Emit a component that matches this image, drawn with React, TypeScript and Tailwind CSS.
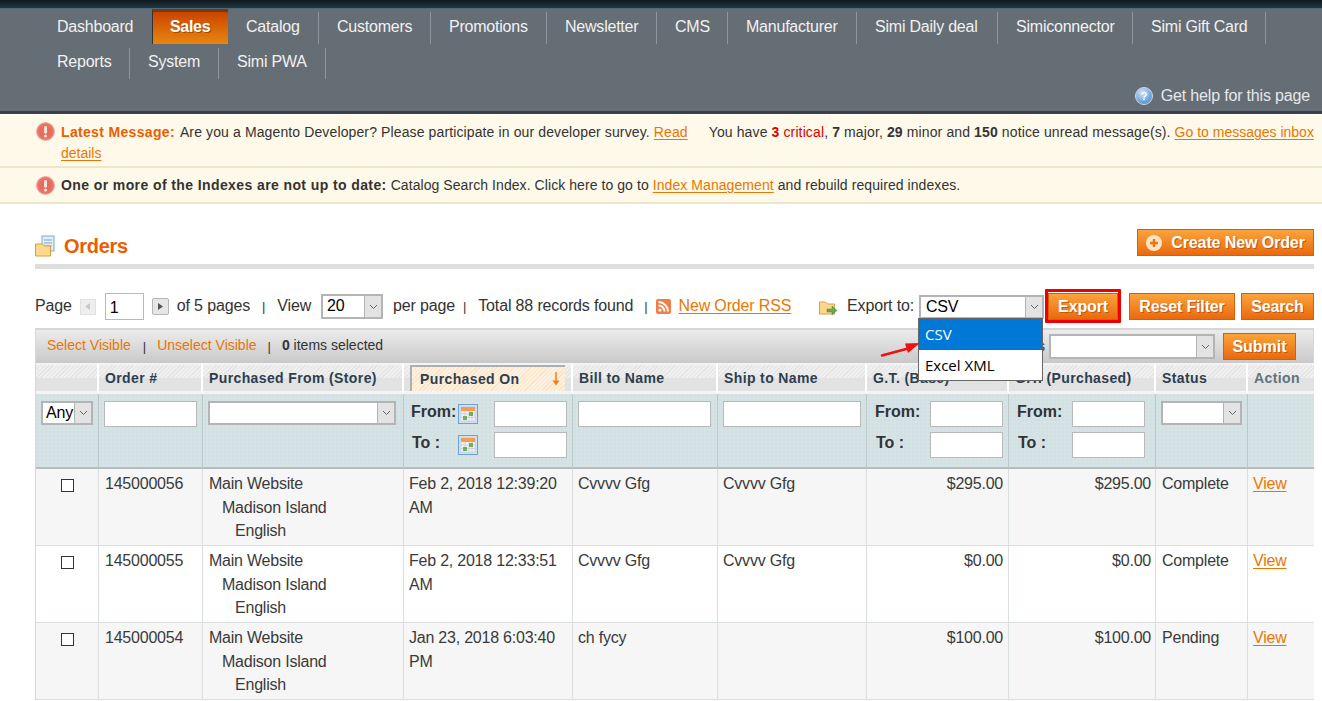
import React from "react";

const navRow1: [string, string][] = [
  ["Dashboard", "w-[114px]"], ["Catalog", "w-[91px]"], ["Customers", "w-[112px]"], ["Promotions", "w-[116px]"], ["Newsletter", "w-[110px]"],
  ["CMS", "w-[71px]"], ["Manufacturer", "w-[129px]"], ["Simi Daily deal", "w-[141px]"], ["Simiconnector", "w-[135px]"], ["Simi Gift Card", "w-[133px]"],
];
const navRow2: [string, string][] = [["Reports", "w-[91px]"], ["System", "w-[89px]"], ["Simi PWA", "w-[107px]"]];

function Alert() {
  return (
    <svg width="19" height="19" viewBox="0 0 19 19" className="shrink-0">
      <circle cx="9.5" cy="9.5" r="9" fill="#e8776a" stroke="#f2b3a8" />
      <circle cx="9.5" cy="9.5" r="6.5" fill="#ea6a5c" />
      <rect x="8" y="4" width="3" height="7.5" rx="1.2" fill="#fbe4dc" />
      <circle cx="9.5" cy="14" r="1.6" fill="#fbe4dc" />
    </svg>
  );
}

function Chevron() {
  return (
    <svg width="9" height="6" viewBox="0 0 9 6">
      <path d="M1 1l3.5 3.5L8 1" fill="none" stroke="#666" strokeWidth="1" />
    </svg>
  );
}

function Sel({ cls, text, pad = "pl-[4px]" }: { cls: string; text?: string; pad?: string }) {
  return (
    <div className={`flex border-2 border-[#b4b4b4] bg-white shrink-0 overflow-hidden ${cls}`}>
      <div className={`flex-1 ${pad} text-[16px] text-black leading-[20px] overflow-hidden whitespace-nowrap tracking-[-0.2px]`}>{text}</div>
      <div className="w-[17px] bg-[#e3e3e3] border-l border-[#b4b4b4] flex items-center justify-center shrink-0">
        <Chevron />
      </div>
    </div>
  );
}

function Btn({ children, cls }: { children: React.ReactNode; cls: string }) {
  return (
    <div className={`flex items-center justify-center border border-[#d85e0a] bg-gradient-to-b from-[#fba33a] to-[#e9690b] text-white font-bold text-[16px] [text-shadow:1px_1px_0_#c65a08] shrink-0 ${cls}`}>
      {children}
    </div>
  );
}

function Input({ cls, children }: { cls: string; children?: React.ReactNode }) {
  return <div className={`bg-white border border-[#b9b9b9] shrink-0 ${cls}`}>{children}</div>;
}

function Cal() {
  return (
    <svg width="20" height="20" viewBox="0 0 20 20" className="shrink-0">
      <rect x="0.5" y="0.5" width="19" height="19" fill="#cfe0f2" stroke="#6fa3d8" />
      <rect x="3" y="3" width="14" height="14" fill="#f3f3f3" stroke="#b9c6d2" strokeWidth="0.5" />
      <rect x="3" y="3" width="14" height="4" fill="#f59c52" />
      <path d="M3 10h14M3 13.5h14M7 7v10M11 7v10M14 7v10" stroke="#b7c2cc" strokeWidth="0.6" />
      <rect x="5" y="12" width="4" height="4" fill="#76ad5c" />
      <rect x="11" y="8" width="4" height="4" fill="#76ad5c" />
    </svg>
  );
}

function DateFilter() {
  return (
    <div className="flex flex-col gap-[5px] pt-[7px] pl-[7px] font-bold text-[16px] text-[#333]">
      <div className="flex items-center h-[26px]">
        <span className="w-[47px] -mt-[4px]">From:</span>
        <span className="w-[36px] flex"><Cal /></span>
        <Input cls="w-[73px] h-[26px]" />
      </div>
      <div className="flex items-center h-[26px]">
        <span className="w-[47px] pl-[1px] -mt-[4px]">To :</span>
        <span className="w-[36px] flex"><Cal /></span>
        <Input cls="w-[73px] h-[26px]" />
      </div>
    </div>
  );
}

function PriceFilter() {
  return (
    <div className="flex flex-col gap-[5px] pt-[7px] pl-[8px] font-bold text-[16px] text-[#333]">
      <div className="flex items-center h-[26px]">
        <span className="w-[55px] -mt-[4px]">From:</span>
        <Input cls="w-[73px] h-[26px]" />
      </div>
      <div className="flex items-center h-[26px]">
        <span className="w-[55px] pl-[1px] -mt-[4px]">To :</span>
        <Input cls="w-[73px] h-[26px]" />
      </div>
    </div>
  );
}

const hatch =
  "bg-[linear-gradient(to_bottom,transparent_0,transparent_50%,#e2e2e2_50%,#e2e2e2_100%),repeating-linear-gradient(135deg,#e4e4e4_0,#e4e4e4_1px,#efefef_1px,#efefef_3px)]";
const th = `${hatch} border-t-2 border-b-[3px] border-t-[#f4f4f4] border-b-[#f4f4f4] border-r-2 border-r-white text-left font-bold text-[14px] tracking-[0.38px] text-[#2d3e50] px-[6px] p-0 h-[31px] shadow-[0_1px_0_#9aa5aa]`;
const ftd =
  "h-[75px] align-top p-0 border-r border-[#bdc8ca] border-b-2 border-b-[#b4bcbe] bg-[#d5e3e5] bg-[radial-gradient(#cfdfe2_1px,transparent_1px)] bg-[length:4px_4px]";

const rows = [
  ["145000056", "Feb 2, 2018 12:39:20 AM", "Cvvvv Gfg", "Cvvvv Gfg", "$295.00", "$295.00", "Complete"],
  ["145000055", "Feb 2, 2018 12:33:51 AM", "Cvvvv Gfg", "Cvvvv Gfg", "$0.00", "$0.00", "Complete"],
  ["145000054", "Jan 23, 2018 6:03:40 PM", "ch fycy", "", "$100.00", "$100.00", "Pending"],
];

const td = "align-top p-0 px-[6px] pt-[3px] border-r border-b border-[#dadfe0] text-[16px] leading-[23.5px] text-[#3a3a3a] tracking-[-0.22px]";
const link = "text-[#ea7601] underline underline-offset-2";
const sep = "relative pl-[18px] flex items-center text-[16px] text-[#f2f2f2] tracking-[-0.22px] whitespace-nowrap after:content-[''] after:absolute after:right-0 after:bottom-0 after:w-[1px] after:bg-[#8f979e]";

export default function App() {
  return (
    <div className="w-[1322px] h-[701px] overflow-hidden bg-white font-['Liberation_Sans',Arial,sans-serif] text-[#333] relative">
      {/* header */}
      <div className="h-[8px] bg-gradient-to-b from-[#10181c] to-[#1e3a45]" />
      <div className="h-[1px] bg-[#4f6a76]" />
      <div className="h-[105px] bg-[#656d75] border-b-[3px] border-[#3c4146] flex flex-col">
        <div className="flex pl-[39px] h-[35px]">
          {navRow1.slice(0, 1).map(([n, w]) => (
            <div key={n} className={`${sep} ${w} after:hidden`}>{n}</div>
          ))}
          <div className="w-[76px] -ml-[1px] pl-[17px] flex items-center font-bold text-[16px] text-white border-l border-[#2f3336] bg-gradient-to-b from-[#c94300] to-[#e8860f] border-t-[3px] border-t-[#7a3a05] tracking-[-0.3px] pb-[2px] [text-shadow:1px_1px_0_#a84a00]">
            Sales
          </div>
          {navRow1.slice(1).map(([n, w]) => (
            <div key={n} className={`${sep} ${w} after:top-[3px]`}>{n}</div>
          ))}
        </div>
        <div className="flex pl-[39px] h-[35px] pt-[4px]">
          {navRow2.map(([n, w]) => (
            <div key={n} className={`${sep} ${w} pb-[4px] after:top-0`}>{n}</div>
          ))}
        </div>
        <div className="flex justify-end items-center pr-[12px] text-[16px] text-[#e6e8ea] tracking-[-0.17px] gap-[8px] h-[28px] mt-[3px]">
          <svg width="18" height="18" viewBox="0 0 18 18">
            <defs>
              <radialGradient id="h" cx="0.4" cy="0.3" r="0.8">
                <stop offset="0" stopColor="#cfe4fa" />
                <stop offset="1" stopColor="#3f86d0" />
              </radialGradient>
            </defs>
            <circle cx="9" cy="9" r="8.5" fill="url(#h)" stroke="#cfd8e2" />
            <text x="9" y="13" textAnchor="middle" fontSize="11" fontWeight="bold" fill="#fff" fontFamily="Liberation Sans">?</text>
          </svg>
          Get help for this page
        </div>
      </div>

      {/* notices */}
      <div className="mt-[1px] bg-[#fff9e9] border-b-2 border-[#eee6c8] pl-[36px] pr-[8px] pt-[7px] h-[53px] text-[14px] leading-[21px] text-[#333] relative">
        <div className="absolute left-[36px] top-[7px]"><Alert /></div>
        <div className="pl-[25px]">
          <div className="flex whitespace-pre tracking-[0.12px]">
            <span className="font-bold text-[#eb5e00] tracking-[0.33px]">Latest Message:</span>
            <span className="ml-[5px]">Are you a Magento Developer? Please participate in our developer survey.</span>
            <span className={`ml-[4px] ${link}`}>Read</span>
            <span className="ml-[21px]">You have <b className="text-[#dd0000]">3</b> <span className="text-[#dd0000]">critical</span>, <b>7</b> major, <b>29</b> minor and <b>150</b> notice unread message(s).</span>
            <span className={`ml-[4px] tracking-normal ${link}`}>Go to messages inbox</span>
          </div>
          <div className={link}>details</div>
        </div>
      </div>
      <div className="bg-[#fff9e9] border-b-2 border-[#eee6c8] pl-[36px] h-[36px] flex items-center gap-[6px] text-[14px]">
        <Alert />
        <div className="tracking-[0.07px]">
          <b className="tracking-[0.4px]">One or more of the Indexes are not up to date:</b> Catalog Search Index. Click here to go to{" "}
          <span className={link}>Index Management</span> and rebuild required indexes.
        </div>
      </div>

      {/* title */}
      <div className="ml-[35px] h-[65px] border-b-[5px] border-[#dedede] flex items-start justify-between pt-[27px] w-[1279px]">
        <div className="flex items-center gap-[9px] mt-[1px] h-[28px]">
          <svg width="20" height="22" viewBox="0 0 20 22">
            <rect x="7" y="1" width="12" height="15" fill="#e3eef9" stroke="#7fa6cf" />
            <path d="M9 5h8M9 8h8M9 11h8" stroke="#7fa6cf" />
            <path d="M0.5 9h7l2 2h6v10h-15z" fill="#fcd98a" stroke="#d2a24a" />
          </svg>
          <span className="font-bold text-[20px] text-[#eb5e00] tracking-[-0.3px]">Orders</span>
        </div>
        <Btn cls="w-[177px] h-[27px] -mt-[2px] gap-[8px]">
          <svg width="16" height="16" viewBox="0 0 16 16">
            <circle cx="8" cy="8" r="8" fill="#fde4c4" />
            <path d="M8 4v8M4 8h8" stroke="#e8750f" strokeWidth="2.4" />
          </svg>
          <span className="ml-[1px] tracking-[-0.1px]">Create New Order</span>
        </Btn>
      </div>

      {/* toolbar */}
      <div className="relative ml-[35px] w-[1279px] h-[59px] pt-[16px] flex items-center justify-between text-[16px] text-[#333] tracking-[-0.15px] whitespace-nowrap">
        <div className="flex items-center">
          <span className="-mt-[2px]">Page</span>
          <span className="ml-[8px] w-[16px] h-[16px] bg-[#eeeeee] border border-[#e2e2e2] flex items-center justify-center">
            <svg width="5" height="7" viewBox="0 0 5 7"><path d="M5 0v7L0 3.5z" fill="#c8c8c8" /></svg>
          </span>
          <Input cls="ml-[9px] w-[39px] h-[27px] pl-[4px] text-[16px] text-black leading-[27px]">1</Input>
          <span className="ml-[8px] w-[17px] h-[17px] bg-[#e6e6e6] border border-[#b5b5b5] rounded-[2px] flex items-center justify-center">
            <svg width="5" height="7" viewBox="0 0 5 7"><path d="M0 0v7l5-3.5z" fill="#555" /></svg>
          </span>
          <span className="ml-[8px] -mt-[2px]">of 5 pages</span>
          <span className="ml-[12px] text-[13px]">|</span>
          <span className="ml-[12px] -mt-[2px]">View</span>
          <Sel cls="ml-[10px] w-[62px] h-[25px]" text="20" />
          <span className="ml-[10px] -mt-[2px]">per page</span>
          <span className="ml-[8px] text-[13px]">|</span>
          <span className="ml-[12px] -mt-[2px]">Total 88 records found</span>
          <span className="ml-[11px] text-[13px]">|</span>
          <svg className="ml-[8px]" width="15" height="15" viewBox="0 0 15 15">
            <rect width="15" height="15" rx="2" fill="#ee7f4a" />
            <circle cx="4" cy="11" r="1.6" fill="#fff" />
            <path d="M2.5 6.5a6 6 0 0 1 6 6M2.5 3a9.5 9.5 0 0 1 9.5 9.5" fill="none" stroke="#fff" strokeWidth="1.8" />
          </svg>
          <span className={`ml-[8px] -mt-[2px] ${link}`}>New Order RSS</span>
        </div>
        <div className="flex items-center">
          <svg width="19" height="17" viewBox="0 0 19 17" className="mt-[3px]">
            <path d="M0.5 2h6l2 2h7v10h-15z" fill="#fcd98a" stroke="#d2a24a" />
            <path d="M8 9h5V6l5 4.5-5 4.5v-3H8z" fill="#6aa84f" stroke="#4f8a3a" strokeWidth="0.5" />
          </svg>
          <span className="ml-[9px] -mt-[2px]">Export to:</span>
          <Sel cls="ml-[5px] w-[125px] h-[24px]" text="CSV" pad="pl-[5px]" />
          <Btn cls="ml-[4px] w-[70px] h-[27px]">Export</Btn>
          <Btn cls="ml-[11px] w-[106px] h-[27px]">Reset Filter</Btn>
          <Btn cls="ml-[6px] w-[73px] h-[27px]">Search</Btn>
        </div>
      </div>

      {/* grid */}
      <div className="ml-[35px] w-[1279px] border-x border-[#d3d7d8] border-t-2 border-t-[#d6d6d6]">
        <div className="h-[33px] bg-gradient-to-b from-[#ececec] to-[#c9c9c9] flex items-center text-[14px] pl-[11px] relative">
          <span className="text-[#ea7601] -mt-[2px]">Select Visible</span>
          <span className="ml-[12px] text-[13px]">|</span>
          <span className="ml-[11px] text-[#ea7601] -mt-[2px]">Unselect Visible</span>
          <span className="ml-[11px] text-[13px]">|</span>
          <span className="ml-[11px] -mt-[2px]"><b>0</b> items selected</span>
          <div className="ml-auto flex items-center">
            <span className="mr-[4px]">Actions</span>
            <Sel cls="w-[166px] h-[25px]" />
            <Btn cls="ml-[8px] mr-[17px] w-[73px] h-[27px]">Submit</Btn>
          </div>
        </div>
        <table className="table-fixed w-[1278px] border-separate border-spacing-0">
          <colgroup>
            <col className="w-[63px]" />
            <col className="w-[104px]" />
            <col className="w-[201px]" />
            <col className="w-[169px]" />
            <col className="w-[145px]" />
            <col className="w-[149px]" />
            <col className="w-[142px]" />
            <col className="w-[147px]" />
            <col className="w-[92px]" />
            <col className="w-[66px]" />
          </colgroup>
          <thead>
            <tr>
              <th className={th}></th>
              <th className={th}>Order #</th>
              <th className={th}>Purchased From (Store)</th>
              <th className={th}>
                <div className="flex items-center justify-between h-[26px] border-l-2 border-t-2 border-[#aab0b4] bg-[repeating-linear-gradient(135deg,#fbe3c8_0,#fbe3c8_1px,#fff0df_1px,#fff0df_3px)] pl-[8px] pr-[5px]">
                  Purchased On
                  <svg width="8" height="14" viewBox="0 0 8 14"><path d="M4 0v10" stroke="#f07f1a" strokeWidth="1.5" /><path d="M0.5 8.5h7L4 13.5z" fill="#f07f1a" /></svg>
                </div>
              </th>
              <th className={th}>Bill to Name</th>
              <th className={th}>Ship to Name</th>
              <th className={th}>G.T. (Base)</th>
              <th className={th}>G.T. (Purchased)</th>
              <th className={th}>Status</th>
              <th className={`${th} !text-[#5f7480] !border-r-0`}>Action</th>
            </tr>
          </thead>
          <tbody>
            <tr>
              <td className={ftd}><div className="pl-[5px] pt-[7px]"><Sel cls="w-[52px] h-[24px]" text="Any" pad="pl-[3px]" /></div></td>
              <td className={ftd}><div className="pl-[5px] pt-[7px]"><Input cls="w-[93px] h-[26px]" /></div></td>
              <td className={ftd}><div className="pl-[5px] pt-[7px]"><Sel cls="w-[188px] h-[24px]" /></div></td>
              <td className={ftd}><DateFilter /></td>
              <td className={ftd}><div className="pl-[5px] pt-[7px]"><Input cls="w-[133px] h-[26px]" /></div></td>
              <td className={ftd}><div className="pl-[5px] pt-[7px]"><Input cls="w-[138px] h-[26px]" /></div></td>
              <td className={ftd}><PriceFilter /></td>
              <td className={ftd}><PriceFilter /></td>
              <td className={ftd}><div className="pl-[5px] pt-[7px]"><Sel cls="w-[81px] h-[24px]" /></div></td>
              <td className={`${ftd} !border-r-0`}></td>
            </tr>
            {rows.map((r, i) => (
              <tr key={r[0]} className={`h-[77px] ${i % 2 === 0 ? "bg-[#f6f6f6]" : "bg-white"}`}>
                <td className={td}>
                  <div className="pl-[19px] pt-[7px]"><div className="w-[13px] h-[13px] border border-[#333] bg-white" /></div>
                </td>
                <td className={td}>{r[0]}</td>
                <td className={td}>
                  <div>Main Website</div>
                  <div className="pl-[13px]">Madison Island</div>
                  <div className="pl-[26px]">English</div>
                </td>
                <td className={`${td} !px-[5px]`}>{r[1]}</td>
                <td className={`${td} !px-[5px]`}>{r[2]}</td>
                <td className={`${td} !px-[5px]`}>{r[3]}</td>
                <td className={`${td} text-right !pr-[5px]`}>{r[4]}</td>
                <td className={`${td} text-right !pr-[4px]`}>{r[5]}</td>
                <td className={td}>{r[6]}</td>
                <td className={`${td} !border-r-0 !pl-[5px]`}><span className={link}>View</span></td>
              </tr>
            ))}
          </tbody>
        </table>
      </div>

      {/* overlays */}
      <div className="absolute left-[1045px] top-[289px] w-[76px] h-[34px] border-[3px] border-[#ee0000] rounded-[1px]" />
      <div className="absolute left-[918px] top-[318px] w-[125px] h-[63px] border border-[#666] bg-white font-['Open_Sans',sans-serif] text-[15px] text-black">
        <div className="h-[31px] bg-[#0078d7] text-white pl-[6px] leading-[30px]">CSV</div>
        <div className="h-[30px] pl-[6px] leading-[31px]">Excel XML</div>
      </div>
      <svg className="absolute left-[880px] top-[340px]" width="42" height="18" viewBox="0 0 42 18">
        <path d="M2 15.5L28 8.5" stroke="#ee1111" strokeWidth="2.5" strokeLinecap="round" />
        <path d="M40 3L25 3.5L28 13z" fill="#ee1111" />
      </svg>
    </div>
  );
}
